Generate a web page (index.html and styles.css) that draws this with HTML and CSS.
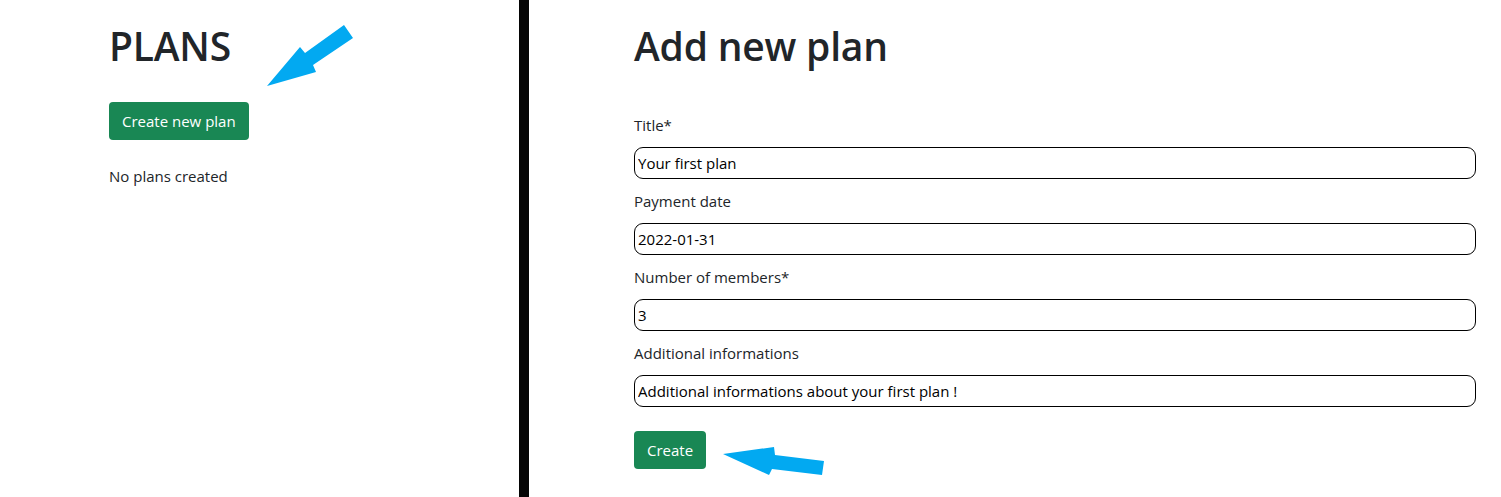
FILE: index.html
```html
<!DOCTYPE html>
<html lang="en">
<head>
<meta charset="utf-8">
<title>Plans</title>
<link rel="stylesheet" href="styles.css">
</head>
<body>
<div class="page">
  <section class="pane pane-left">
    <h1 class="title">PLANS</h1>
    <button class="btn">Create new plan</button>
    <p class="empty">No plans created</p>
  </section>
  <div class="divider"></div>
  <section class="pane pane-right">
    <h1 class="title">Add new plan</h1>
    <form class="form">
      <label class="label">Title*</label>
      <input class="field" type="text" value="Your first plan">
      <label class="label">Payment date</label>
      <input class="field" type="text" value="2022-01-31">
      <label class="label">Number of members*</label>
      <input class="field" type="text" value="3">
      <label class="label">Additional informations</label>
      <input class="field" type="text" value="Additional informations about your first plan !">
      <div class="actions"><button class="btn" type="button">Create</button></div>
    </form>
  </section>
  <svg class="arrows" width="1501" height="497" viewBox="0 0 1501 497">
    <polygon fill="#02a9f1" points="267,86 300,47 305,53 344,25 353,38 313,65 316,72"/>
    <polygon fill="#02a9f1" points="723,454 774,447 775,455 824,461 822,475 772,469 769,475"/>
  </svg>
</div>
</body>
</html>
```
FILE: styles.css
```css
html, body {
  margin: 0;
  padding: 0;
  background: #fff;
}
body {
  font-family: "Open Sans", "Noto Sans", "Liberation Sans", sans-serif;
  color: #212529;
  font-size: 15px;
}
.page {
  position: relative;
  display: flex;
  height: 497px;
  overflow: hidden;
}
.pane-left {
  width: 410px;
  padding-left: 109px;
}
.divider {
  width: 10px;
  background: #050505;
  flex: none;
}
.pane-right {
  flex: 1;
  padding-left: 105px;
  padding-right: 25px;
}
.title {
  margin: 22px 0 0;
  font-size: 39px;
  font-weight: 600;
  line-height: 48px;
  color: #212529;
  letter-spacing: -0.2px;
}
.btn {
  display: inline-block;
  background: #198754;
  color: #fff;
  border: 0;
  border-radius: 4px;
  font-family: inherit;
  font-size: 15px;
  line-height: 24px;
  padding: 7px 13px;
  height: 38px;
  cursor: pointer;
}
.pane-left .btn {
  margin-top: 32px;
}
.empty {
  margin: 24px 0 0;
  line-height: 24px;
}
.form {
  display: flex;
  flex-direction: column;
  margin-top: 43px;
}
.label {
  line-height: 24px;
  margin-bottom: 10px;
}
.field {
  box-sizing: border-box;
  height: 32px;
  border: 1px solid #000;
  border-radius: 9px;
  padding: 1px 3px;
  font-family: inherit;
  font-size: 15px;
  color: #000;
  margin-bottom: 10px;
  outline: none;
}
.actions {
  margin-top: 14px;
}
.arrows {
  position: absolute;
  left: 0;
  top: 0;
  pointer-events: none;
}
```
